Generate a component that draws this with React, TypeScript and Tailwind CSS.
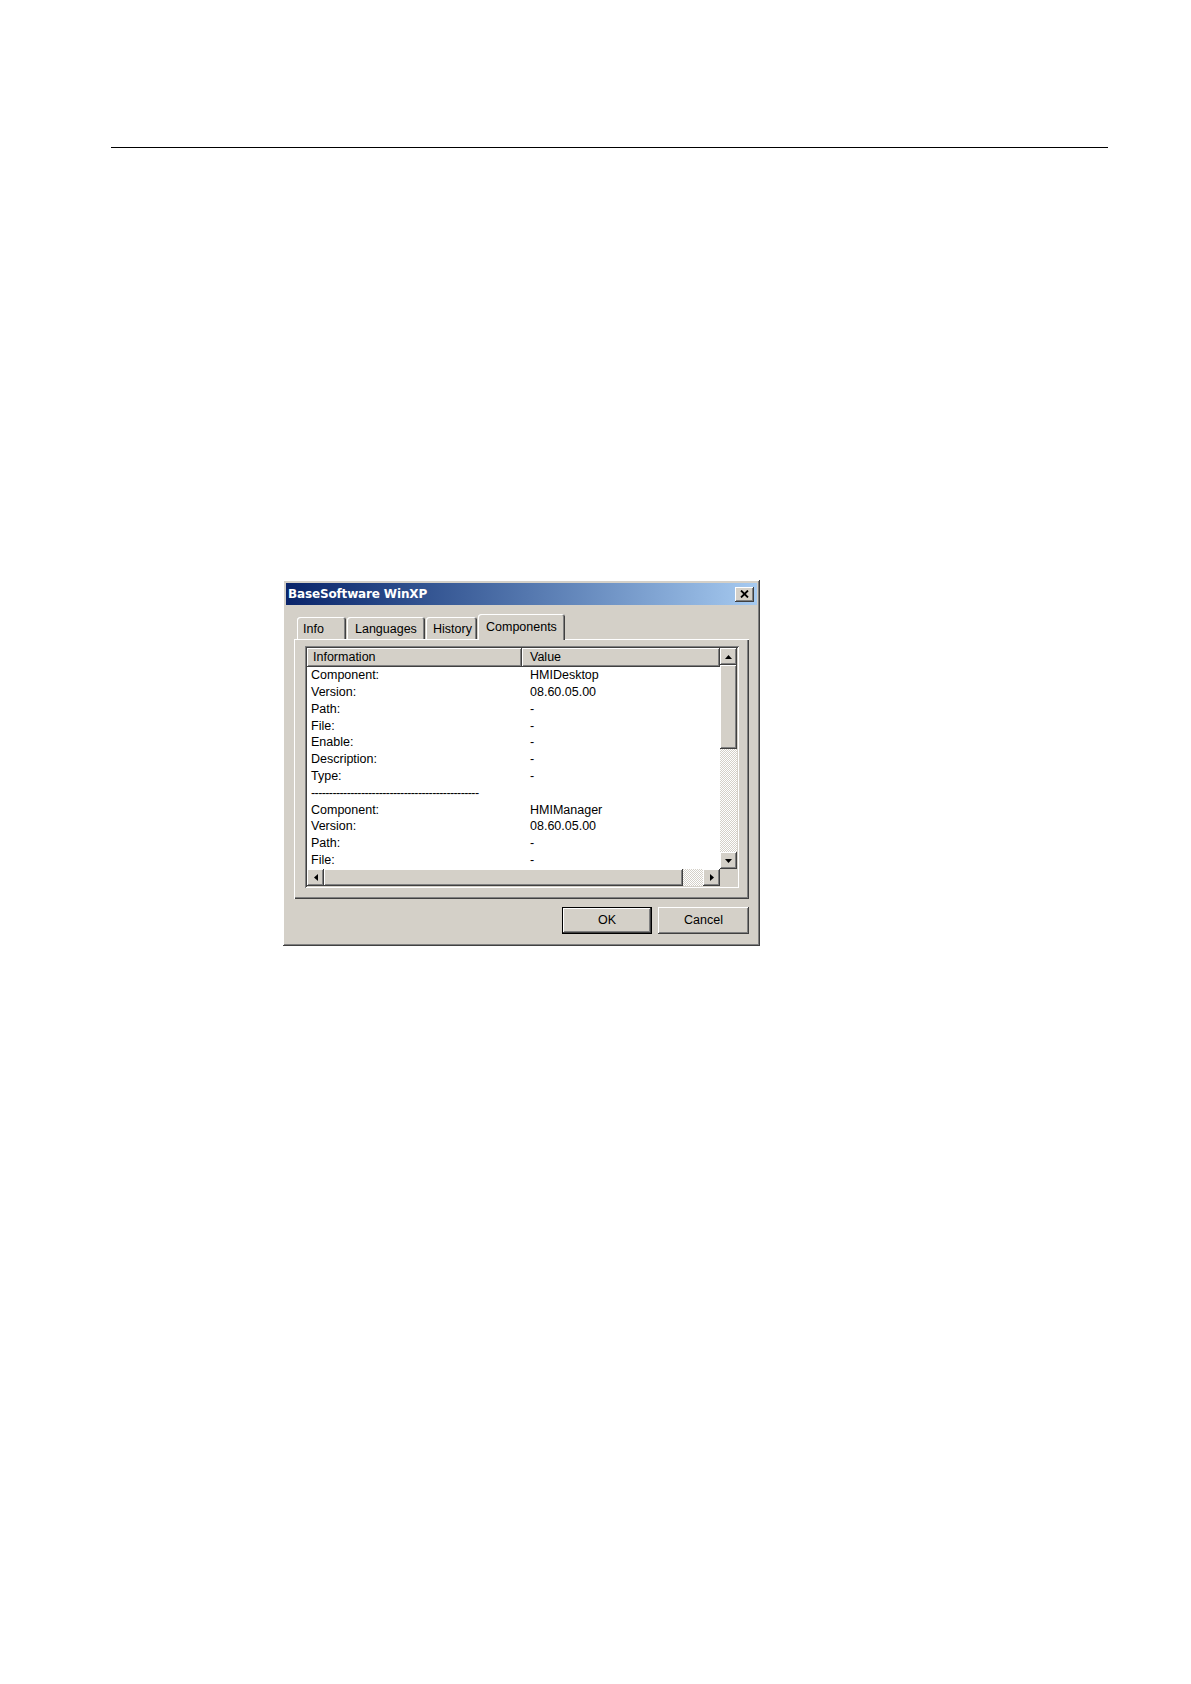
import React from "react";

const raised =
  "shadow-[inset_-1px_-1px_#404040,inset_1px_1px_#ffffff,inset_-2px_-2px_#808080,inset_2px_2px_#d4d0c8]";
const sunken =
  "shadow-[inset_1px_1px_#808080,inset_-1px_-1px_#ffffff,inset_2px_2px_#404040,inset_-2px_-2px_#d4d0c8]";
const panel =
  "shadow-[inset_1px_1px_#ffffff,inset_-1px_-1px_#404040,inset_-2px_-2px_#808080]";
const tabEdge =
  "shadow-[inset_1px_1px_#ffffff,inset_-1px_0_#404040,inset_-2px_0_#808080]";
const track =
  "bg-[repeating-conic-gradient(#ffffff_0_25%,#d4d0c8_0_50%)] bg-[length:2px_2px]";

const DASHES = "-----------------------------------------------";

const rows: [string, string][] = [
  ["Component:", "HMIDesktop"],
  ["Version:", "08.60.05.00"],
  ["Path:", "-"],
  ["File:", "-"],
  ["Enable:", "-"],
  ["Description:", "-"],
  ["Type:", "-"],
  [DASHES, ""],
  ["Component:", "HMIManager"],
  ["Version:", "08.60.05.00"],
  ["Path:", "-"],
  ["File:", "-"],
];

function Arrow({ dir }: { dir: "up" | "down" | "left" | "right" }) {
  const pts = {
    up: "0,4 3.5,0 7,4",
    down: "0,0 7,0 3.5,4",
    left: "4,0 4,7 0,3.5",
    right: "0,0 0,7 4,3.5",
  }[dir];
  const vertical = dir === "up" || dir === "down";
  return (
    <svg
      width={vertical ? 7 : 4}
      height={vertical ? 4 : 7}
      viewBox={vertical ? "0 0 7 4" : "0 0 4 7"}
    >
      <polygon points={pts} fill="#000" />
    </svg>
  );
}

function Tab({
  label,
  width,
  pad,
  selected,
}: {
  label: string;
  width: string;
  pad: string;
  selected?: boolean;
}) {
  return (
    <div
      className={`${width} ${pad} ${tabEdge} flex whitespace-nowrap rounded-t-[3px] bg-[#d4d0c8] ${
        selected
          ? "relative z-10 -mb-px h-[26px] items-center"
          : "h-[22px] items-center pt-[2px]"
      }`}
    >
      {label}
    </div>
  );
}

export default function App() {
  return (
    <div className="min-h-[1684px] w-full bg-white font-['Liberation_Sans',Arial,sans-serif] text-black">
      <div className="ml-[111px] pt-[147px]">
        <div className="h-px w-[997px] bg-black" />
      </div>

      <div className="ml-[283px] mt-[432px] w-[477px]">
        <div className={`h-[366px] w-[477px] bg-[#d4d0c8] p-[3px] ${raised}`}>
          {/* title bar */}
          <div className="flex h-[22px] items-center justify-between bg-linear-to-r from-[#0a246a] to-[#a6caf0] pl-[2px] pr-[3px]">
            <span className="font-['DejaVu_Sans',Verdana,sans-serif] text-[12px] font-bold tracking-[-0.15px] text-white">
              BaseSoftware WinXP
            </span>
            <div className={`flex h-[15px] w-[19px] items-center justify-center bg-[#d4d0c8] ${raised}`}>
              <svg width="9" height="8" viewBox="0 0 9 8">
                <path d="M1 0.5 L8 7.5 M8 0.5 L1 7.5" stroke="#000" strokeWidth="1.8" />
              </svg>
            </div>
          </div>

          {/* tabs */}
          <div className="flex h-[34px] items-end pl-[11px] text-[12.5px]">
            <Tab label="Info" width="w-[49px]" pad="pl-[6px]" />
            <div className="ml-px" />
            <Tab label="Languages" width="w-[78px]" pad="pl-[8px]" />
            <div className="ml-px" />
            <Tab label="History" width="w-[51px]" pad="pl-[7px]" />
            <div className="ml-px" />
            <Tab label="Components" width="w-[87px]" pad="pl-[8px]" selected />
          </div>

          {/* tab page */}
          <div className={`ml-[8px] h-[260px] w-[455px] pl-[11px] pt-[7px] ${panel}`}>
            <div
              className={`grid h-[242px] w-[434px] grid-cols-[413px_17px] grid-rows-[221px_17px] p-[2px] text-[12.5px] ${sunken}`}
            >
              <div className="flex flex-col bg-white">
                <div className="flex h-[19px] bg-[#d4d0c8]">
                  <div className={`flex w-[215px] items-center pl-[6px] ${raised}`}>Information</div>
                  <div className={`flex flex-1 items-center pl-[8px] ${raised}`}>Value</div>
                </div>
                <div className="h-[202px] overflow-hidden">
                  {rows.map(([k, v], i) => (
                    <div key={i} className="flex h-[16.8px] items-center leading-none">
                      <div className="w-[215px] whitespace-nowrap pl-[4px]">
                        {k === DASHES ? <span className="tracking-[-0.6px]">{k}</span> : k}
                      </div>
                      <div className="pl-[8px]">{v}</div>
                    </div>
                  ))}
                </div>
              </div>

              {/* vertical scrollbar */}
              <div className="flex flex-col">
                <div className={`flex h-[17px] items-center justify-center bg-[#d4d0c8] ${raised}`}>
                  <Arrow dir="up" />
                </div>
                <div className={`h-[84px] bg-[#d4d0c8] ${raised}`} />
                <div className={`flex-1 ${track}`} />
                <div className={`flex h-[17px] items-center justify-center bg-[#d4d0c8] ${raised}`}>
                  <Arrow dir="down" />
                </div>
              </div>

              {/* horizontal scrollbar */}
              <div className="flex">
                <div className={`flex w-[17px] items-center justify-center bg-[#d4d0c8] ${raised}`}>
                  <Arrow dir="left" />
                </div>
                <div className={`w-[359px] bg-[#d4d0c8] ${raised}`} />
                <div className={`flex-1 ${track}`} />
                <div className={`flex w-[17px] items-center justify-center bg-[#d4d0c8] ${raised}`}>
                  <Arrow dir="right" />
                </div>
              </div>
              <div className="bg-[#d4d0c8]" />
            </div>
          </div>

          {/* buttons */}
          <div className="mt-[8px] flex justify-end gap-[6px] pr-[8px] text-[12.5px]">
            <div className="h-[27px] w-[90px] border border-black">
              <div className={`flex h-full w-full items-center justify-center bg-[#d4d0c8] ${raised}`}>OK</div>
            </div>
            <div className={`flex h-[27px] w-[91px] items-center justify-center bg-[#d4d0c8] ${raised}`}>
              Cancel
            </div>
          </div>
        </div>
      </div>
    </div>
  );
}
